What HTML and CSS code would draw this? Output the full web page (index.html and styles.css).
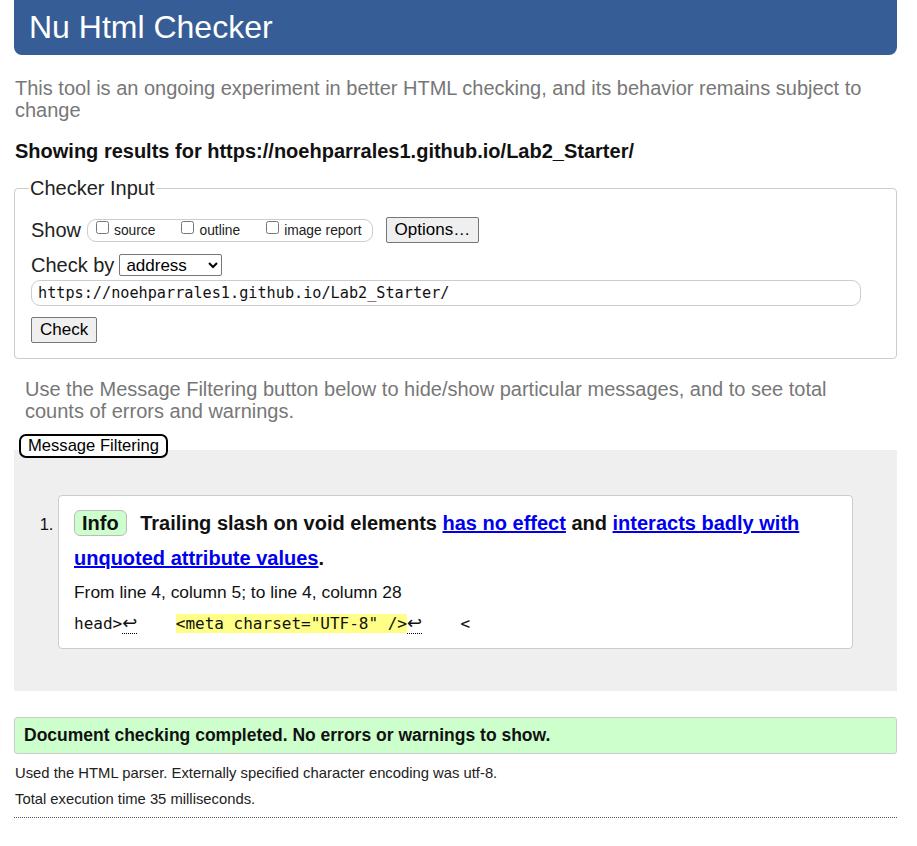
FILE: index.html
```html
<!DOCTYPE html>
<html lang="en">
<head>
<meta charset="utf-8">
<title>Nu Html Checker</title>
<link rel="stylesheet" href="styles.css">
</head>
<body>
<div class="page">
  <h1 class="banner">Nu Html Checker</h1>
  <p class="intro">This tool is an ongoing experiment in better HTML checking, and its behavior remains subject to change</p>
  <p class="showing">Showing results for https://noehparrales1.github.io/Lab2_Starter/</p>

  <fieldset class="input">
    <legend>Checker Input</legend>
    <div class="row row-show">
      <span class="lbl">Show</span>
      <span class="pill">
        <label class="opt"><input type="checkbox"> source</label>
        <label class="opt"><input type="checkbox"> outline</label>
        <label class="opt"><input type="checkbox"> image report</label>
      </span>
      <button class="btn">Options…</button>
    </div>
    <div class="row row-by">
      <span class="lbl">Check by</span>
      <select class="sel"><option>address</option></select>
    </div>
    <div class="url">https://noehparrales1.github.io/Lab2_Starter/</div>
    <div class="row row-check"><button class="btn">Check</button></div>
  </fieldset>

  <p class="hint">Use the Message Filtering button below to hide/show particular messages, and to see total counts of errors and warnings.</p>

  <div class="results">
    <button class="filter">Message Filtering</button>
    <div class="panel">
      <ol class="messages">
        <li class="msg">
          <p class="title"><span class="badge">Info</span> Trailing slash on void elements <a href="#">has no effect</a> and <a href="#">interacts badly with unquoted attribute values</a>.</p>
          <p class="loc">From line 4, column 5; to line 4, column 28</p>
          <p class="extract">head&gt;<span class="lf">↩</span>    <mark>&lt;meta charset="UTF-8" /&gt;</mark><span class="lf">↩</span>    &lt;</p>
        </li>
      </ol>
    </div>
  </div>

  <p class="success">Document checking completed. No errors or warnings to show.</p>
  <p class="details first">Used the HTML parser. Externally specified character encoding was utf-8.</p>
  <p class="details">Total execution time 35 milliseconds.</p>
  <hr class="rule">
</div>
</body>
</html>
```

FILE: styles.css
```css
html, body { margin: 0; padding: 0; background: #fff; }
body { font-family: "Liberation Sans", Arial, sans-serif; color: #111; }
.page { padding: 0 20px 0 14px; }

.banner {
  margin: 0;
  height: 55px;
  box-sizing: border-box;
  padding: 7px 15px 0;
  background: #365d95;
  color: #fff;
  font-weight: normal;
  font-size: 32px;
  line-height: 40px;
  border-radius: 0 0 8px 8px;
}

.intro {
  margin: 22px 0 0 1px;
  color: #777;
  font-size: 20px;
  line-height: 22px;
}
.showing {
  margin: 18px 0 0 1px;
  font-weight: bold;
  font-size: 20px;
  line-height: 24px;
  color: #111;
}

.input {
  margin: 14px 0 0;
  padding: 15px 16px 15px 16px;
  border: 1px solid #ccc;
  border-radius: 4px;
}
.input legend {
  font-size: 20px;
  padding: 0 1px;
  margin-left: -2px;
  color: #222;
}
.row { display: flex; align-items: center; }
.row-show { height: 26px; margin-top: 2px; }
.row-by { height: 24px; margin-top: 10px; }
.row-check { margin-top: 11px; }
.lbl { font-size: 20px; color: #222; margin-right: 6px; }
.row-by .lbl { margin-right: 5px; }
.pill {
  display: inline-flex;
  align-items: center;
  border: 1px solid #ccc;
  border-radius: 9px;
  height: 21px;
  padding: 0 10px 0 8px;
  gap: 26px;
  margin-right: 13px;
}
.opt { font-size: 13.8px; color: #222; display: inline-flex; align-items: center; }
.opt input { margin: 0 5px 0 0; width: 13px; height: 13px; position: relative; top: -3px; }
.btn {
  font-family: "Liberation Sans", Arial, sans-serif;
  font-size: 17px;
  padding: 0 8px;
  height: 26px;
  border: 1px solid #767676;
  border-radius: 2px;
  background: #efefef;
  color: #000;
}
.sel {
  font-family: "Liberation Sans", Arial, sans-serif;
  font-size: 17px;
  height: 22px;
  width: 103px;
  padding: 0 2px;
  border: 1px solid #767676;
  border-radius: 2px;
  background: #fff;
  color: #000;
}
.url {
  margin-top: 3px;
  margin-right: 19px;
  height: 26px;
  box-sizing: border-box;
  border: 1px solid #ccc;
  border-radius: 9px;
  padding: 2px 6px 0;
  font-family: "DejaVu Sans Mono", "Liberation Mono", monospace;
  font-size: 15.2px;
  line-height: 20px;
  color: #111;
}

.hint {
  margin: 19px 0 0 11px;
  color: #777;
  font-size: 20px;
  line-height: 22px;
  max-width: 840px;
}

.results { margin-top: 12px; }
.filter {
  position: relative;
  z-index: 1;
  margin-left: 5px;
  font-family: "Liberation Sans", Arial, sans-serif;
  font-size: 16.6px;
  height: 24px;
  padding: 0 7px;
  background: #fff;
  border: 2px solid #000;
  border-radius: 7px;
  color: #000;
  vertical-align: top;
}
.panel {
  margin-top: -8px;
  background: #efefef;
  padding: 45px 44px 42px 0;
}
.messages {
  margin: 0;
  padding-left: 44px;
  list-style: decimal;
}
.msg {
  font-size: 16px;
  background: #fff;
  border: 1px solid #ccc;
  border-radius: 4px;
  padding: 10px 15px 13px;
  color: #111;
}
.msg::marker { font-size: 16.5px; }
.title {
  margin: 0;
  font-weight: bold;
  font-size: 20px;
  line-height: 35px;
}
.title a { color: #00e; text-decoration: underline; }
.badge {
  display: inline-block;
  background: #cfc;
  border: 1px solid #bbb;
  border-radius: 6px;
  padding: 0 7px;
  line-height: 24px;
  margin-right: 8px;
}
.loc { margin: 6px 0 0; font-size: 17.4px; line-height: 20px; }
.extract {
  margin: 11px 0 0;
  font-family: "DejaVu Sans Mono", "Liberation Mono", monospace;
  font-size: 16px;
  line-height: 22px;
  white-space: pre;
}
.extract mark { background: #ff8; color: #111; }
.lf {
  border-bottom: 1px dotted #000;
  font-family: "DejaVu Sans", sans-serif;
  font-size: 18px;
  line-height: 1;
}

.success {
  margin: 26px 0 0;
  background: #cfc;
  border: 1px solid #ccc;
  border-radius: 3px;
  padding: 7px 9px 8px;
  font-weight: bold;
  font-size: 17.5px;
  line-height: 20px;
  color: #111;
}
.details { margin: 8px 0 0 1px; font-size: 14.8px; line-height: 18px; color: #222; }
.details.first { margin-top: 10px; }
.rule { margin: 9px 0 0; border: 0; border-top: 1px dotted #555; }
```
